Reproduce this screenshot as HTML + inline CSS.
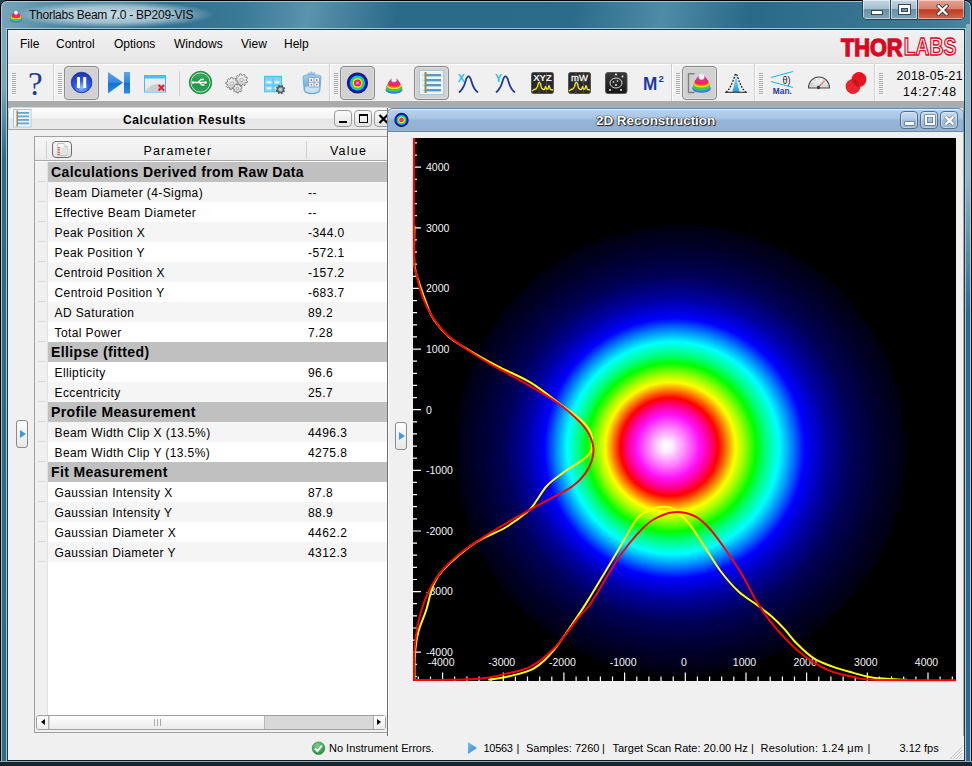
<!DOCTYPE html>
<html><head><meta charset="utf-8">
<style>
*{margin:0;padding:0;box-sizing:border-box}
html,body{width:972px;height:766px;overflow:hidden;background:#1d4556}
body{position:relative;font-family:"Liberation Sans",sans-serif;font-size:12px;color:#000}
.a{position:absolute}
#frame{left:0;top:0;width:972px;height:772px;border-radius:7px 7px 0 0;
 background:linear-gradient(100deg,#78a6ba 0%,#3f7c98 8%,#2f6f8e 14%,#3a7a97 22%,#5a93ac 28%,#2b6b8a 36%,#2c6c8b 52%,#4e8ca7 60%,#2a6988 68%,#3c7a96 84%,#74a6bb 100%);
 border:1px solid #000;box-shadow:inset 0 0 0 1px rgba(190,220,232,0.75)}
#client{left:7px;top:29px;width:958px;height:732px;background:#f0f0f0;border:1px solid #1e3646;box-shadow:0 0 0 1px rgba(175,210,224,0.85)}
.t{position:absolute;white-space:nowrap;line-height:1}
</style></head><body>
<div id="frame" class="a"></div>
<div id="client" class="a"></div>
<div class="a" style="left:2px;top:27px;width:4px;height:734px;background:linear-gradient(#7ea9bc 0,#7aa6ba 60px,#2c6b8a 130px)"></div>
<div class="a" style="left:966px;top:24px;width:4px;height:737px;background:linear-gradient(#8ab2c4 0,#92b8c9 150px,#2c6b8a 290px)"></div>

<!-- title -->
<div class="a" style="left:14px;top:1px;width:200px;height:27px;background:radial-gradient(closest-side,rgba(225,238,244,0.85),rgba(225,238,244,0.6) 60%,rgba(225,238,244,0) 100%)"></div>
<svg class="a" style="left:9px;top:10px" width="14" height="14" viewBox="0 0 14 14"><ellipse cx="7.00" cy="10.20" rx="5.60" ry="2.40" fill="#3a7ee8"/><ellipse cx="7.00" cy="9.93" rx="5.59" ry="2.37" fill="#3a7ee8"/><ellipse cx="7.00" cy="9.67" rx="5.56" ry="2.34" fill="#3a7ee8"/><ellipse cx="7.00" cy="9.40" rx="5.52" ry="2.30" fill="#3a7ee8"/><ellipse cx="7.00" cy="9.13" rx="5.47" ry="2.27" fill="#2fb4a0"/><ellipse cx="7.00" cy="8.87" rx="5.41" ry="2.24" fill="#2fb4a0"/><ellipse cx="7.00" cy="8.60" rx="5.34" ry="2.21" fill="#40c850"/><ellipse cx="7.00" cy="8.33" rx="5.27" ry="2.18" fill="#40c850"/><ellipse cx="7.00" cy="8.07" rx="5.18" ry="2.14" fill="#40c850"/><ellipse cx="7.00" cy="7.80" rx="5.10" ry="2.11" fill="#40c850"/><ellipse cx="7.00" cy="7.53" rx="5.00" ry="2.08" fill="#40c850"/><ellipse cx="7.00" cy="7.27" rx="4.90" ry="2.05" fill="#e8e020"/><ellipse cx="7.00" cy="7.00" rx="4.78" ry="2.02" fill="#e8e020"/><ellipse cx="7.00" cy="6.73" rx="4.67" ry="1.98" fill="#e8e020"/><ellipse cx="7.00" cy="6.47" rx="4.54" ry="1.95" fill="#f87018"/><ellipse cx="7.00" cy="6.20" rx="4.40" ry="1.92" fill="#f87018"/><ellipse cx="7.00" cy="5.93" rx="4.26" ry="1.89" fill="#f87018"/><ellipse cx="7.00" cy="5.67" rx="4.11" ry="1.86" fill="#f22a2a"/><ellipse cx="7.00" cy="5.40" rx="3.95" ry="1.82" fill="#f22a2a"/><ellipse cx="7.00" cy="5.13" rx="3.78" ry="1.79" fill="#f22a2a"/><ellipse cx="7.00" cy="4.87" rx="3.59" ry="1.76" fill="#e82a8a"/><ellipse cx="7.00" cy="4.60" rx="3.40" ry="1.73" fill="#e82a8a"/><ellipse cx="7.00" cy="4.33" rx="3.19" ry="1.70" fill="#e82a8a"/><ellipse cx="7.00" cy="4.07" rx="2.96" ry="1.66" fill="#e82a8a"/><ellipse cx="7.00" cy="3.80" rx="2.72" ry="1.63" fill="#e82a8a"/><ellipse cx="7.00" cy="3.53" rx="2.46" ry="1.60" fill="#e82a8a"/><ellipse cx="7.00" cy="3.27" rx="2.16" ry="1.57" fill="#e82a8a"/><ellipse cx="7.00" cy="3.00" rx="1.83" ry="1.54" fill="#f4f4f4"/><ellipse cx="7.00" cy="2.73" rx="1.44" ry="1.50" fill="#f4f4f4"/><ellipse cx="7.00" cy="2.47" rx="1.34" ry="1.47" fill="#f4f4f4"/><ellipse cx="7.00" cy="2.20" rx="1.34" ry="1.44" fill="#f4f4f4"/></svg>
<div class="t" style="left:29px;top:9px;font-size:12px;letter-spacing:-0.25px;color:#0a0a0a">Thorlabs Beam 7.0 - BP209-VIS</div>

<!-- caption buttons -->
<div class="a" style="left:862px;top:0;width:103px;height:20px;border:1px solid #2a4350;border-top:none;border-radius:0 0 5px 5px;overflow:hidden;display:flex">
 <div style="width:28px;height:100%;background:linear-gradient(#c3d7e1 0%,#a3bfcd 45%,#6a93a8 50%,#7ea4b6 100%);border-right:1px solid #2a4350;box-shadow:inset 0 0 0 1px rgba(255,255,255,0.5);position:relative">
  <div class="a" style="left:8px;top:10px;width:12px;height:5px;background:#fff;border:1px solid #34495a"></div></div>
 <div style="width:27px;height:100%;background:linear-gradient(#c3d7e1 0%,#a3bfcd 45%,#6a93a8 50%,#7ea4b6 100%);border-right:1px solid #2a4350;box-shadow:inset 0 0 0 1px rgba(255,255,255,0.5);position:relative">
  <div class="a" style="left:8px;top:5px;width:11px;height:9px;border:2.5px solid #fff;border-top-width:3px;outline:1px solid #34495a;box-shadow:inset 0 0 0 1px #34495a"></div></div>
 <div style="flex:1;height:100%;background:linear-gradient(#e2a496 0%,#d88370 45%,#c23a1e 52%,#d06a50 100%);box-shadow:inset 0 0 0 1px rgba(255,255,255,0.45);position:relative">
  <svg class="a" style="left:18px;top:4px" width="13" height="12" viewBox="0 0 13 12"><path d="M2.5 2 L10.5 10 M10.5 2 L2.5 10" stroke="#3c4048" stroke-width="4" stroke-linecap="square"/><path d="M2.5 2 L10.5 10 M10.5 2 L2.5 10" stroke="#fff" stroke-width="2.2" stroke-linecap="square"/></svg></div>
</div>

<!-- menu -->
<div class="a" style="left:8px;top:30px;width:956px;height:33px;background:linear-gradient(#f1f1f1,#e6e6e6)"></div>
<div class="t" style="left:20px;top:38px">File</div>
<div class="t" style="left:56px;top:38px">Control</div>
<div class="t" style="left:114px;top:38px">Options</div>
<div class="t" style="left:174px;top:38px">Windows</div>
<div class="t" style="left:241px;top:38px">View</div>
<div class="t" style="left:284px;top:38px">Help</div>


<!-- toolbar -->
<div class="a" style="left:8px;top:63px;width:956px;height:1px;background:#d9d9d9"></div>
<div class="a" style="left:8px;top:64px;width:956px;height:37px;background:#f0f0f0;border-top:1px solid #fff"></div>
<div class="a" style="left:8px;top:101px;width:956px;height:7px;background:#ababab"></div>
<style>
.grip{position:absolute;top:73px;width:4px;height:22px;background:repeating-linear-gradient(#a6a6a6 0,#a6a6a6 1px,#fff 1px,#fff 2px)}
.sep{position:absolute;top:64px;width:2px;height:37px;border-left:1px solid #d0d0d0;border-right:1px solid #fff}
.prs{position:absolute;top:66px;width:35px;height:34px;border:1px solid #8a8a8a;border-radius:4px;background:#d1d1d1;box-shadow:inset 0 0 0 1px #dcdcdc}
</style>
<div class="grip" style="left:12px"></div>
<div class="sep" style="left:53px"></div>
<div class="grip" style="left:58px"></div>
<div class="sep" style="left:329px"></div>
<div class="grip" style="left:334px"></div>
<div class="sep" style="left:671px"></div>
<div class="grip" style="left:676px"></div>
<div class="sep" style="left:754px"></div>
<div class="grip" style="left:759px"></div>
<div class="sep" style="left:874px"></div>
<div class="grip" style="left:879px"></div>
<div class="a" style="left:179px;top:71px;width:1px;height:25px;background:#cfcfcf"></div>
<div class="prs" style="left:64px"></div>
<div class="prs" style="left:340px"></div>
<div class="prs" style="left:414px"></div>
<div class="prs" style="left:682px"></div>

<div class="t" style="left:28px;top:68px;font-family:'Liberation Serif',serif;font-size:33px;color:#1f3b9a">?</div>

<svg class="a" style="left:70px;top:71px" width="24" height="24" viewBox="0 0 24 24">
 <defs><radialGradient id="gp" cx="0.5" cy="0.75" r="0.75"><stop offset="0" stop-color="#8fc0ff"/><stop offset="0.45" stop-color="#2c5df0"/><stop offset="1" stop-color="#1a2fa8"/></radialGradient></defs>
 <circle cx="11.6" cy="11.5" r="10.3" fill="url(#gp)" stroke="#1b2d90" stroke-width="0.8"/>
 <rect x="7" y="6" width="3" height="11" fill="#fff"/><rect x="13.2" y="6" width="3" height="11" fill="#fff"/>
</svg>

<svg class="a" style="left:107px;top:71px" width="24" height="24" viewBox="0 0 24 24">
 <defs><linearGradient id="gpl" x1="0" y1="0" x2="0" y2="1"><stop offset="0" stop-color="#5aa6f0"/><stop offset="0.5" stop-color="#2f86e0"/><stop offset="0.52" stop-color="#1070d0"/><stop offset="1" stop-color="#2a90e8"/></linearGradient></defs>
 <path d="M1 1 L16 11.5 L1 22.5Z" fill="url(#gpl)"/>
 <rect x="17" y="1" width="6" height="21.5" fill="url(#gpl)"/>
</svg>

<svg class="a" style="left:144px;top:75px" width="23" height="18" viewBox="0 0 23 18">
 <rect x="0.5" y="0.5" width="21" height="16.5" fill="#e9eaec" stroke="#45b8ee"/>
 <rect x="0.5" y="0.5" width="21" height="3" fill="#4cc0f2"/>
 <path d="M1 17 Q6 8 15 9 L21 10 L21 17Z" fill="#cdcdcd"/>
 <path d="M14.5 10 L20 15.5 M20 10 L14.5 15.5" stroke="#e0202a" stroke-width="2"/>
</svg>

<svg class="a" style="left:188px;top:70px" width="25" height="25" viewBox="0 0 25 25">
 <defs><linearGradient id="gu" x1="0" y1="0" x2="0" y2="1"><stop offset="0" stop-color="#3ab060"/><stop offset="0.5" stop-color="#1f9a48"/><stop offset="1" stop-color="#2aa456"/></linearGradient></defs>
 <circle cx="12.5" cy="12.5" r="11.2" fill="url(#gu)" stroke="#137a36" stroke-width="0.8"/>
 <circle cx="12.5" cy="12.5" r="9.6" fill="none" stroke="#d8f0e0" stroke-width="0.8"/>
 <path d="M5 12.5 H19 M10 12.5 L13 9.5 H16 M11.5 12.5 L14 15 H16.5" stroke="#fff" stroke-width="1.3" fill="none"/>
 <path d="M19 12.5 l-2.2 -1.6 v3.2z" fill="#fff"/><circle cx="5" cy="12.5" r="1.2" fill="#fff"/>
</svg>

<svg class="a" style="left:225px;top:73px" width="24" height="21" viewBox="0 0 24 21">
 <defs><linearGradient id="ggr" x1="0" y1="0" x2="0" y2="1"><stop offset="0" stop-color="#fbfbfb"/><stop offset="1" stop-color="#c8c8c8"/></linearGradient></defs>
 <g fill="url(#ggr)" stroke="#6c6c6c" stroke-width="0.8" stroke-linejoin="round">
 <path d="M21.28 7.48 L22.57 8.26 L22.09 9.69 L20.58 9.52 L19.85 10.44 L20.34 11.87 L19.05 12.65 L18.00 11.56 L16.86 11.79 L16.31 13.20 L14.82 12.97 L14.72 11.46 L13.70 10.90 L12.37 11.63 L11.38 10.49 L12.27 9.27 L11.85 8.18 L10.36 7.89 L10.33 6.38 L11.80 6.02 L12.18 4.92 L11.23 3.74 L12.17 2.56 L13.53 3.23 L14.53 2.62 L14.56 1.11 L16.04 0.82 L16.64 2.20 L17.80 2.38 L18.80 1.24 L20.12 1.97 L19.69 3.42 L20.47 4.30 L21.96 4.06 L22.51 5.47 L21.25 6.31Z"/><path d="M11.70 11.45 L12.91 12.36 L12.29 13.74 L10.81 13.42 L9.99 14.25 L10.33 15.73 L8.97 16.38 L8.04 15.19 L6.88 15.30 L6.20 16.65 L4.73 16.27 L4.79 14.76 L3.82 14.10 L2.43 14.69 L1.55 13.46 L2.57 12.34 L2.25 11.21 L0.81 10.77 L0.92 9.27 L2.42 9.06 L2.91 7.99 L2.08 6.73 L3.14 5.65 L4.42 6.45 L5.47 5.95 L5.65 4.45 L7.16 4.30 L7.62 5.74 L8.76 6.03 L9.86 5.00 L11.10 5.85 L10.54 7.25 L11.22 8.21 L12.73 8.12 L13.13 9.58 L11.80 10.29Z"/><path d="M15.84 16.53 L16.67 17.44 L15.87 18.63 L14.72 18.21 L13.78 18.76 L13.59 19.97 L12.15 20.09 L11.77 18.92 L10.75 18.53 L9.68 19.14 L8.70 18.09 L9.37 17.06 L9.04 16.02 L7.90 15.57 L8.11 14.14 L9.33 14.03 L9.94 13.12 L9.58 11.94 L10.82 11.22 L11.67 12.10 L12.76 12.01 L13.46 11.00 L14.80 11.52 L14.64 12.73 L15.39 13.53 L16.62 13.45 L17.05 14.82 L16.00 15.45Z"/>
 </g>
 <g fill="#f4f4f4" stroke="#8a8a8a" stroke-width="0.7"><circle cx="7" cy="10.5" r="1.7"/><circle cx="16.5" cy="7" r="1.7"/><circle cx="12.5" cy="15.5" r="1.2"/></g>
</svg>

<svg class="a" style="left:263px;top:75px" width="23" height="20" viewBox="0 0 23 20">
 <rect x="1" y="0.8" width="18" height="16.5" fill="#48c4f2"/>
 <rect x="2" y="2.6" width="16" height="0.8" fill="#c8ecfb"/>
 <rect x="2" y="4.2" width="16" height="12.2" fill="#8ad8f6"/>
 <path d="M10 4.2 V16.4 M2 10.3 H18" stroke="#48c4f2" stroke-width="0.9"/>
 <g fill="#f4f0ec"><rect x="3.5" y="6.3" width="5" height="2" rx="1"/><rect x="11.5" y="6.3" width="5" height="2" rx="1"/><rect x="3.5" y="12.2" width="5" height="2" rx="1"/><rect x="11.5" y="12.2" width="5" height="2" rx="1"/></g>
 <path d="M20.73 15.16 L21.68 15.87 L21.15 16.96 L20.00 16.65 L19.32 17.25 L19.48 18.43 L18.34 18.82 L17.75 17.79 L16.84 17.73 L16.13 18.68 L15.04 18.15 L15.35 17.00 L14.75 16.32 L13.57 16.48 L13.18 15.34 L14.21 14.75 L14.27 13.84 L13.32 13.13 L13.85 12.04 L15.00 12.35 L15.68 11.75 L15.52 10.57 L16.66 10.18 L17.25 11.21 L18.16 11.27 L18.87 10.32 L19.96 10.85 L19.65 12.00 L20.25 12.68 L21.43 12.52 L21.82 13.66 L20.79 14.25Z" fill="#585858" stroke="#3a3a3a" stroke-width="0.5"/>
 <circle cx="17.5" cy="14.5" r="1.8" fill="#a8c8e0" stroke="#e0e0e0" stroke-width="0.6"/>
</svg>

<svg class="a" style="left:301px;top:70px" width="22" height="25" viewBox="0 0 22 25">
 <defs><linearGradient id="gdb" x1="0" y1="0" x2="0" y2="1"><stop offset="0" stop-color="#a8d0ea"/><stop offset="0.5" stop-color="#7ab4de"/><stop offset="1" stop-color="#4a98e0"/></linearGradient>
 <linearGradient id="gdb2" x1="0" y1="0" x2="0" y2="1"><stop offset="0" stop-color="#8ec2e6"/><stop offset="1" stop-color="#e4f2fc"/></linearGradient></defs>
 <path d="M15.08 7.46 L15.99 8.08 L15.63 9.25 L14.52 9.24 L13.93 10.06 L14.31 11.10 L13.32 11.84 L12.43 11.17 L11.48 11.49 L11.17 12.56 L9.94 12.57 L9.61 11.51 L8.65 11.21 L7.77 11.89 L6.77 11.18 L7.13 10.13 L6.53 9.32 L5.42 9.36 L5.03 8.19 L5.93 7.55 L5.92 6.54 L5.01 5.92 L5.37 4.75 L6.48 4.76 L7.07 3.94 L6.69 2.90 L7.68 2.16 L8.57 2.83 L9.52 2.51 L9.83 1.44 L11.06 1.43 L11.39 2.49 L12.35 2.79 L13.23 2.11 L14.23 2.82 L13.87 3.87 L14.47 4.68 L15.58 4.64 L15.97 5.81 L15.07 6.45Z" fill="#94c4e6"/>
 <path d="M2 8 Q1.5 5 5 5 L17 5 Q20.5 5 20 8 L19 20 Q18.5 23.5 11 23.8 Q3.5 23.5 3 20Z" fill="url(#gdb)" stroke="#5a9ad4" stroke-width="0.6"/>
 <path d="M4 17 Q11 14 18.5 17 L18.2 20 Q17 22.8 11 23 Q5 22.8 3.8 20Z" fill="#d8ecfa" opacity="0.85"/>
 <rect x="7.5" y="7.5" width="11" height="9.5" rx="1" fill="#eef4f8" stroke="#6a90b0" stroke-width="0.7"/>
 <path d="M13 8 V16.5 M8 12.2 H18" stroke="#6a90b0" stroke-width="0.7"/>
 <g fill="#b07090"><circle cx="10.3" cy="10" r="0.9"/><circle cx="15.7" cy="10" r="0.9"/><circle cx="10.3" cy="14.6" r="0.9"/><circle cx="15.7" cy="14.6" r="0.9"/></g>
</svg>

<svg class="a" style="left:346px;top:72px" width="23" height="23" viewBox="0 0 23 23">
 <circle cx="11.5" cy="11" r="10.6" fill="#1c1f5e"/>
 <circle cx="11.5" cy="11" r="9" fill="#1010f0"/>
 <circle cx="11.5" cy="11" r="7.6" fill="#00c8f8"/>
 <circle cx="11.5" cy="11" r="6.2" fill="#20e030"/>
 <circle cx="11.5" cy="11" r="4.8" fill="#f8f010"/>
 <circle cx="11.5" cy="11" r="3.5" fill="#f82020"/>
 <circle cx="11.5" cy="11" r="2.4" fill="#f820e8"/>
 <circle cx="11.5" cy="11" r="1" fill="#ffd0ff"/>
</svg>

<svg class="a" style="left:384px;top:75px" width="20" height="21" viewBox="0 0 20 21"><ellipse cx="10.00" cy="15.30" rx="8.20" ry="3.40" fill="#3a7ee8"/><ellipse cx="10.00" cy="14.92" rx="8.18" ry="3.35" fill="#3a7ee8"/><ellipse cx="10.00" cy="14.53" rx="8.14" ry="3.31" fill="#3a7ee8"/><ellipse cx="10.00" cy="14.15" rx="8.08" ry="3.26" fill="#3a7ee8"/><ellipse cx="10.00" cy="13.77" rx="8.00" ry="3.22" fill="#2fb4a0"/><ellipse cx="10.00" cy="13.38" rx="7.92" ry="3.17" fill="#2fb4a0"/><ellipse cx="10.00" cy="13.00" rx="7.82" ry="3.13" fill="#40c850"/><ellipse cx="10.00" cy="12.62" rx="7.71" ry="3.08" fill="#40c850"/><ellipse cx="10.00" cy="12.23" rx="7.59" ry="3.04" fill="#40c850"/><ellipse cx="10.00" cy="11.85" rx="7.46" ry="2.99" fill="#40c850"/><ellipse cx="10.00" cy="11.47" rx="7.32" ry="2.95" fill="#40c850"/><ellipse cx="10.00" cy="11.08" rx="7.17" ry="2.90" fill="#e8e020"/><ellipse cx="10.00" cy="10.70" rx="7.01" ry="2.86" fill="#e8e020"/><ellipse cx="10.00" cy="10.32" rx="6.83" ry="2.81" fill="#e8e020"/><ellipse cx="10.00" cy="9.93" rx="6.65" ry="2.77" fill="#f87018"/><ellipse cx="10.00" cy="9.55" rx="6.45" ry="2.72" fill="#f87018"/><ellipse cx="10.00" cy="9.17" rx="6.24" ry="2.67" fill="#f87018"/><ellipse cx="10.00" cy="8.78" rx="6.02" ry="2.63" fill="#f22a2a"/><ellipse cx="10.00" cy="8.40" rx="5.78" ry="2.58" fill="#f22a2a"/><ellipse cx="10.00" cy="8.02" rx="5.53" ry="2.54" fill="#f22a2a"/><ellipse cx="10.00" cy="7.63" rx="5.26" ry="2.49" fill="#e82a8a"/><ellipse cx="10.00" cy="7.25" rx="4.98" ry="2.45" fill="#e82a8a"/><ellipse cx="10.00" cy="6.87" rx="4.67" ry="2.40" fill="#e82a8a"/><ellipse cx="10.00" cy="6.48" rx="4.34" ry="2.36" fill="#e82a8a"/><ellipse cx="10.00" cy="6.10" rx="3.98" ry="2.31" fill="#e82a8a"/><ellipse cx="10.00" cy="5.72" rx="3.60" ry="2.27" fill="#e82a8a"/><ellipse cx="10.00" cy="5.33" rx="3.17" ry="2.22" fill="#e82a8a"/><ellipse cx="10.00" cy="4.95" rx="2.68" ry="2.18" fill="#f4f4f4"/><ellipse cx="10.00" cy="4.57" rx="2.12" ry="2.13" fill="#f4f4f4"/><ellipse cx="10.00" cy="4.18" rx="1.97" ry="2.09" fill="#f4f4f4"/><ellipse cx="10.00" cy="3.80" rx="1.97" ry="2.04" fill="#f4f4f4"/></svg>

<svg class="a" style="left:419px;top:70px" width="25" height="26" viewBox="0 0 25 26">
 <rect x="0.5" y="0.5" width="24" height="24" fill="#fff" stroke="#a8c8e0"/>
 <rect x="1.5" y="1.5" width="22" height="22" fill="#eaf4fb"/>
 <g fill="#5a9ac0"><rect x="7" y="4" width="15" height="2.4"/><rect x="7" y="9" width="15" height="2.4"/><rect x="7" y="14" width="15" height="2.4"/><rect x="7" y="19" width="15" height="2.4"/></g>
 <g fill="#c0e0f4"><rect x="3" y="4.5" width="3" height="1.4"/><rect x="3" y="9.5" width="3" height="1.4"/><rect x="3" y="14.5" width="3" height="1.4"/><rect x="3" y="19.5" width="3" height="1.4"/></g>
 <rect x="5.5" y="2" width="2" height="21" fill="#9a8a50"/>
</svg>

<svg class="a" style="left:457px;top:73px" width="23" height="21" viewBox="0 0 23 21">
 <path d="M2 19.5 C5 17 7 14 8.5 8.5 C9.5 4.5 10.5 3.3 11.5 3.3 C12.5 3.3 13.5 4.5 14.5 8.5 C16 14 17.5 17 21 19.5" fill="none" stroke="#22389a" stroke-width="1.8"/>
 <text x="0.8" y="8.8" font-family="Liberation Sans" font-weight="bold" font-size="10.5" fill="#18c0f8">X</text>
</svg>
<svg class="a" style="left:494px;top:73px" width="23" height="21" viewBox="0 0 23 21">
 <path d="M2 19.5 C5 17 7 14 8.5 8.5 C9.5 4.5 10.5 3.3 11.5 3.3 C12.5 3.3 13.5 4.5 14.5 8.5 C16 14 17.5 17 21 19.5" fill="none" stroke="#22389a" stroke-width="1.8"/>
 <text x="1" y="8.8" font-family="Liberation Sans" font-weight="bold" font-size="10.5" fill="#18c0f8">Y</text>
</svg>

<svg class="a" style="left:531px;top:72px" width="23" height="22" viewBox="0 0 23 22">
 <rect x="0.5" y="0.5" width="22" height="21" rx="2" fill="#2a2a2a" stroke="#555"/>
 <path d="M8 1 V21 M15.5 1 V21" stroke="#5a5a5a" stroke-width="0.8"/>
 <text x="11.5" y="8.6" text-anchor="middle" font-family="Liberation Sans" font-weight="bold" font-size="9.5" fill="#f4f4f4">XYZ</text>
 <path d="M1 19 L3 17.5 L5 17 L6.5 14.5 L7.5 11 L8.5 10.3 L9.5 11.5 L10.5 16 L12 17.5 L13.5 17.5 L14.5 14.5 L15.5 17 L17 17 L18 13.5 L19.5 17.5 L22 18" fill="none" stroke="#f4e81a" stroke-width="1.3" stroke-linejoin="round"/>
</svg>
<svg class="a" style="left:568px;top:72px" width="23" height="22" viewBox="0 0 23 22">
 <rect x="0.5" y="0.5" width="22" height="21" rx="2" fill="#2a2a2a" stroke="#555"/>
 <path d="M8 1 V21 M15.5 1 V21" stroke="#5a5a5a" stroke-width="0.8"/>
 <text x="11.5" y="8.6" text-anchor="middle" font-family="Liberation Sans" font-size="9.5" fill="#f4f4f4" stroke="#f4f4f4" stroke-width="0.3">mW</text>
 <path d="M1 19 L3 17.5 L5 17 L6.5 14.5 L7.5 11 L8.5 10.3 L9.5 11.5 L10.5 16 L12 17.5 L13.5 17.5 L14.5 14.5 L15.5 17 L17 17 L18 13.5 L19.5 17.5 L22 18" fill="none" stroke="#f4e81a" stroke-width="1.3" stroke-linejoin="round"/>
</svg>

<svg class="a" style="left:605px;top:72px" width="23" height="22" viewBox="0 0 23 22">
 <defs><linearGradient id="gdt" x1="0" y1="0" x2="0" y2="1"><stop offset="0" stop-color="#3a3a3a"/><stop offset="1" stop-color="#161616"/></linearGradient></defs>
 <rect x="0.5" y="0.5" width="21.5" height="21" rx="2.5" fill="url(#gdt)" stroke="#555"/>
 <ellipse cx="11" cy="11" rx="6" ry="5" fill="none" stroke="#e8e8e8" stroke-width="0.9"/>
 <g fill="#fff"><circle cx="11" cy="2.5" r="0.9"/><circle cx="17.5" cy="4.5" r="0.9"/><circle cx="5" cy="18" r="0.9"/><circle cx="16" cy="18" r="0.9"/><circle cx="8.5" cy="10" r="0.8"/><circle cx="12.5" cy="9" r="0.8"/><circle cx="11" cy="13" r="0.9"/></g>
</svg>

<div class="t" style="left:642.5px;top:74.5px;font-size:18.5px;font-weight:bold;color:#1a3aa8;transform:scaleX(0.93);transform-origin:left">M</div>
<div class="t" style="left:658.5px;top:74px;font-size:9.5px;font-weight:bold;color:#1a3aa8">2</div>

<svg class="a" style="left:687px;top:72px" width="26" height="23" viewBox="0 0 26 23"><path d="M7.5 1.8 H1.5 V20.5 H7.5" fill="none" stroke="#808080" stroke-width="1.4"/><ellipse cx="14.50" cy="17.00" rx="9.00" ry="3.80" fill="#3a7ee8"/><ellipse cx="14.50" cy="16.57" rx="8.98" ry="3.75" fill="#3a7ee8"/><ellipse cx="14.50" cy="16.13" rx="8.93" ry="3.70" fill="#3a7ee8"/><ellipse cx="14.50" cy="15.70" rx="8.86" ry="3.65" fill="#3a7ee8"/><ellipse cx="14.50" cy="15.27" rx="8.78" ry="3.60" fill="#2fb4a0"/><ellipse cx="14.50" cy="14.83" rx="8.69" ry="3.55" fill="#2fb4a0"/><ellipse cx="14.50" cy="14.40" rx="8.58" ry="3.50" fill="#40c850"/><ellipse cx="14.50" cy="13.97" rx="8.46" ry="3.45" fill="#40c850"/><ellipse cx="14.50" cy="13.53" rx="8.33" ry="3.39" fill="#40c850"/><ellipse cx="14.50" cy="13.10" rx="8.19" ry="3.34" fill="#40c850"/><ellipse cx="14.50" cy="12.67" rx="8.03" ry="3.29" fill="#40c850"/><ellipse cx="14.50" cy="12.23" rx="7.87" ry="3.24" fill="#e8e020"/><ellipse cx="14.50" cy="11.80" rx="7.69" ry="3.19" fill="#e8e020"/><ellipse cx="14.50" cy="11.37" rx="7.50" ry="3.14" fill="#e8e020"/><ellipse cx="14.50" cy="10.93" rx="7.29" ry="3.09" fill="#f87018"/><ellipse cx="14.50" cy="10.50" rx="7.08" ry="3.04" fill="#f87018"/><ellipse cx="14.50" cy="10.07" rx="6.85" ry="2.99" fill="#f87018"/><ellipse cx="14.50" cy="9.63" rx="6.60" ry="2.94" fill="#f22a2a"/><ellipse cx="14.50" cy="9.20" rx="6.34" ry="2.89" fill="#f22a2a"/><ellipse cx="14.50" cy="8.77" rx="6.07" ry="2.84" fill="#f22a2a"/><ellipse cx="14.50" cy="8.33" rx="5.77" ry="2.79" fill="#e82a8a"/><ellipse cx="14.50" cy="7.90" rx="5.46" ry="2.74" fill="#e82a8a"/><ellipse cx="14.50" cy="7.47" rx="5.12" ry="2.69" fill="#e82a8a"/><ellipse cx="14.50" cy="7.03" rx="4.76" ry="2.63" fill="#e82a8a"/><ellipse cx="14.50" cy="6.60" rx="4.37" ry="2.58" fill="#e82a8a"/><ellipse cx="14.50" cy="6.17" rx="3.95" ry="2.53" fill="#e82a8a"/><ellipse cx="14.50" cy="5.73" rx="3.47" ry="2.48" fill="#e82a8a"/><ellipse cx="14.50" cy="5.30" rx="2.94" ry="2.43" fill="#f4f4f4"/><ellipse cx="14.50" cy="4.87" rx="2.32" ry="2.38" fill="#f4f4f4"/><ellipse cx="14.50" cy="4.43" rx="2.16" ry="2.33" fill="#f4f4f4"/><ellipse cx="14.50" cy="4.00" rx="2.16" ry="2.28" fill="#f4f4f4"/></svg>

<svg class="a" style="left:724px;top:72px" width="24" height="22" viewBox="0 0 24 22">
 <defs><linearGradient id="gtr" x1="0" y1="0" x2="0" y2="1"><stop offset="0" stop-color="#b0e4fa"/><stop offset="1" stop-color="#1f9ae2"/></linearGradient></defs>
 <path d="M8.3 20 C10 15 11 7 12 2.5 C13 7 14 15 15.7 20Z" fill="url(#gtr)"/>
 <path d="M2 20 C5 18.5 7.5 13 9.5 7.5 C10.7 4 11.3 2 12 2 C12.7 2 13.3 4 14.5 7.5 C16.5 13 19 18.5 22 20" fill="none" stroke="#222" stroke-width="1.3" stroke-dasharray="1.8 1.3"/>
 <path d="M1 20.3 H23" stroke="#222" stroke-width="1"/>
</svg>

<svg class="a" style="left:770px;top:70px" width="24" height="25" viewBox="0 0 24 25">
 <path d="M1 7.5 L23 1.5 M1 11.5 L23 17.5" stroke="#28b8e8" stroke-width="1.2"/>
 <text x="12.5" y="13.8" font-family="Liberation Sans" font-size="10.5" fill="#222" textLength="8" lengthAdjust="spacingAndGlyphs">θ)</text>
 <text x="2.8" y="23.5" font-family="Liberation Sans" font-weight="bold" font-size="8.5" fill="#2a3a9a" textLength="19" lengthAdjust="spacingAndGlyphs">Man.</text>
</svg>

<svg class="a" style="left:807px;top:75px" width="24" height="15" viewBox="0 0 24 15">
 <defs><linearGradient id="gga" x1="0" y1="0" x2="0" y2="1"><stop offset="0" stop-color="#fdfdfd"/><stop offset="1" stop-color="#d0d0d0"/></linearGradient></defs>
 <path d="M1.5 13 A10.5 11 0 0 1 22.5 13 Z" fill="url(#gga)" stroke="#4a4a4a" stroke-width="1.1"/>
 <path d="M11.5 12 L18 5.5" stroke="#e03030" stroke-width="1"/>
 <circle cx="11.5" cy="12.5" r="1.8" fill="#444"/>
 <g fill="#777"><circle cx="5" cy="9" r="0.5"/><circle cx="8" cy="5" r="0.5"/><circle cx="12" cy="4" r="0.5"/><circle cx="16" cy="5" r="0.5"/></g>
</svg>

<svg class="a" style="left:844px;top:71px" width="24" height="24" viewBox="0 0 24 24">
 <circle cx="15" cy="8.5" r="7.4" fill="#e8141e"/>
 <circle cx="9" cy="15.5" r="7.4" fill="#e8141e" fill-opacity="0.92"/>
 <path d="M9.2 8.2 A7.4 7.4 0 0 1 14.8 15.8 A7.4 7.4 0 0 1 9.2 8.2Z" fill="#b01a28"/>
</svg>

<div class="t" style="left:896.5px;top:70px;font-size:12.3px;letter-spacing:0.35px">2018-05-21</div>
<div class="t" style="left:903px;top:86px;font-size:12.3px;letter-spacing:0.75px">14:27:48</div>

<!-- logo -->
<svg class="a" style="left:830px;top:30px" width="135" height="30" viewBox="830 30 135 30">
 <text x="841" y="55.8" font-family="Liberation Sans" font-weight="bold" font-size="23.8" textLength="61.5" lengthAdjust="spacingAndGlyphs" fill="#d70a1f" stroke="#d70a1f" stroke-width="1.3">THOR</text>
 <text x="903.8" y="55.4" font-family="Liberation Sans" font-weight="bold" font-size="23.5" textLength="52.5" lengthAdjust="spacingAndGlyphs" fill="#f4f4f4" stroke="#d70a1f" stroke-width="1.35">LABS</text>
</svg>


<!-- dock -->
<div class="a" style="left:8px;top:107px;width:380px;height:23px;border-radius:5px 0 0 0;background:linear-gradient(#fdfdfd 0%,#f4f4f4 45%,#e6e6e6 55%,#e9e9e9 100%);border-bottom:1px solid #a6a6a6;border-left:1px solid #c8c8c8;border-top:1px solid #d8d8d8"></div>
<svg class="a" style="left:13px;top:109px" width="19" height="19" viewBox="0 0 19 19">
 <rect x="0.5" y="0.5" width="17.5" height="17.5" fill="#fff" stroke="#a8c8e0"/>
 <rect x="1.5" y="1.5" width="15.5" height="15.5" fill="#eaf4fb"/>
 <g fill="#6aa4c8"><rect x="5" y="3" width="11" height="1.8"/><rect x="5" y="6.5" width="11" height="1.8"/><rect x="5" y="10" width="11" height="1.8"/><rect x="5" y="13.5" width="11" height="1.8"/></g>
 <rect x="3.5" y="1.5" width="1.5" height="16" fill="#9a8a50"/>
</svg>
<div class="t" style="left:123px;top:114px;font-size:12px;font-weight:bold;letter-spacing:0.62px">Calculation Results</div>
<style>
.dbtn{position:absolute;top:110px;width:18px;height:17px;border:1px solid #9a9a9a;border-radius:4px;background:linear-gradient(#fafafa,#e4e4e4)}
.cell{position:absolute;left:48px;width:339px;height:20px}
.sec{background:#c0c0c0}
.sec span{position:absolute;left:3px;top:3px;font-size:14px;font-weight:bold;letter-spacing:0.37px;white-space:nowrap;line-height:1}
.rw span{position:absolute;top:5px;font-size:12px;white-space:nowrap;line-height:1}
.vtick{position:absolute;left:38px;width:8px;height:1px;background:#d8d8d8}
</style>
<div class="dbtn" style="left:334px"><div class="a" style="left:4px;top:10px;width:8px;height:2px;background:#000"></div></div>
<div class="dbtn" style="left:354px"><div class="a" style="left:4px;top:3px;width:9px;height:9px;border:1.5px solid #000;border-top-width:2.5px"></div></div>
<div class="dbtn" style="left:374px"><svg class="a" style="left:3px;top:3px" width="11" height="10" viewBox="0 0 11 10"><path d="M1.5 1 L9.5 9 M9.5 1 L1.5 9" stroke="#000" stroke-width="2.3"/></svg></div>

<div class="a" style="left:34px;top:136px;width:354px;height:597px;border:1px solid #a0a0a0;border-right:none;background:#fff"></div>
<div class="a" style="left:35px;top:715px;width:353px;height:17px;background:#f0f0f0"></div>
<div class="a" style="left:35px;top:137px;width:353px;height:24px;background:linear-gradient(#f6f6f6,#ececec);border-bottom:1px solid #a8a8a8"></div>
<div class="a" style="left:46px;top:141px;width:1px;height:18px;background:#d0d0d0"></div>
<div class="a" style="left:306px;top:141px;width:1px;height:18px;background:#d0d0d0"></div>
<svg class="a" style="left:52px;top:141px" width="20" height="17" viewBox="0 0 20 17">
 <defs><linearGradient id="ghd" x1="0" y1="0" x2="0" y2="1"><stop offset="0" stop-color="#f8f8f8"/><stop offset="1" stop-color="#e2e2e2"/></linearGradient></defs>
 <rect x="0.5" y="0.5" width="19" height="16" rx="3.5" fill="url(#ghd)" stroke="#6e6e6e"/>
 <path d="M5.5 2.5 H12 L15 5.5 V14.5 H5.5Z" fill="#fff" stroke="#b8b8b8" stroke-width="0.8"/>
 <path d="M12 2.5 V5.5 H15" fill="#eee" stroke="#b8b8b8" stroke-width="0.6"/>
 <path d="M8.5 7 H14 M8.5 9 H14 M8.5 11 H14 M8.5 13 H14" stroke="#c4c4c4" stroke-width="0.9"/>
 <path d="M7 6 V14" stroke="#e82020" stroke-width="1.4" stroke-dasharray="1.2 0.5"/>
</svg>
<div class="t" style="left:143.5px;top:145px;font-size:12.5px;letter-spacing:1.15px">Parameter</div>
<div class="t" style="left:330px;top:145px;font-size:12.5px;letter-spacing:1.2px">Value</div>
<div class="a" style="left:35px;top:162px;width:13px;height:553px;background:#f0f0f0;border-right:1px solid #e2e2e2"></div>

<div class="cell sec" style="top:162px"><span>Calculations Derived from Raw Data</span></div>
<div class="vtick" style="top:181px"></div>
<div class="cell rw" style="top:182px;background:#f5f5f5"><span style="left:6.5px;letter-spacing:0.4px">Beam Diameter (4-Sigma)</span><span style="left:260px;letter-spacing:0.43px">--</span></div>
<div class="vtick" style="top:201px"></div>
<div class="cell rw" style="top:202px;background:#fff"><span style="left:6.5px;letter-spacing:0.4px">Effective Beam Diameter</span><span style="left:260px;letter-spacing:0.43px">--</span></div>
<div class="vtick" style="top:221px"></div>
<div class="cell rw" style="top:222px;background:#f5f5f5"><span style="left:6.5px;letter-spacing:0.4px">Peak Position X</span><span style="left:260px;letter-spacing:0.43px">-344.0</span></div>
<div class="vtick" style="top:241px"></div>
<div class="cell rw" style="top:242px;background:#fff"><span style="left:6.5px;letter-spacing:0.4px">Peak Position Y</span><span style="left:260px;letter-spacing:0.43px">-572.1</span></div>
<div class="vtick" style="top:261px"></div>
<div class="cell rw" style="top:262px;background:#f5f5f5"><span style="left:6.5px;letter-spacing:0.4px">Centroid Position X</span><span style="left:260px;letter-spacing:0.43px">-157.2</span></div>
<div class="vtick" style="top:281px"></div>
<div class="cell rw" style="top:282px;background:#fff"><span style="left:6.5px;letter-spacing:0.4px">Centroid Position Y</span><span style="left:260px;letter-spacing:0.43px">-683.7</span></div>
<div class="vtick" style="top:301px"></div>
<div class="cell rw" style="top:302px;background:#f5f5f5"><span style="left:6.5px;letter-spacing:0.4px">AD Saturation</span><span style="left:260px;letter-spacing:0.43px">89.2</span></div>
<div class="vtick" style="top:321px"></div>
<div class="cell rw" style="top:322px;background:#fff"><span style="left:6.5px;letter-spacing:0.4px">Total Power</span><span style="left:260px;letter-spacing:0.43px">7.28</span></div>
<div class="vtick" style="top:341px"></div>
<div class="cell sec" style="top:342px"><span>Ellipse (fitted)</span></div>
<div class="vtick" style="top:361px"></div>
<div class="cell rw" style="top:362px;background:#fff"><span style="left:6.5px;letter-spacing:0.4px">Ellipticity</span><span style="left:260px;letter-spacing:0.43px">96.6</span></div>
<div class="vtick" style="top:381px"></div>
<div class="cell rw" style="top:382px;background:#f5f5f5"><span style="left:6.5px;letter-spacing:0.4px">Eccentricity</span><span style="left:260px;letter-spacing:0.43px">25.7</span></div>
<div class="vtick" style="top:401px"></div>
<div class="cell sec" style="top:402px"><span>Profile Measurement</span></div>
<div class="vtick" style="top:421px"></div>
<div class="cell rw" style="top:422px;background:#f5f5f5"><span style="left:6.5px;letter-spacing:0.4px">Beam Width Clip X (13.5%)</span><span style="left:260px;letter-spacing:0.43px">4496.3</span></div>
<div class="vtick" style="top:441px"></div>
<div class="cell rw" style="top:442px;background:#fff"><span style="left:6.5px;letter-spacing:0.4px">Beam Width Clip Y (13.5%)</span><span style="left:260px;letter-spacing:0.43px">4275.8</span></div>
<div class="vtick" style="top:461px"></div>
<div class="cell sec" style="top:462px"><span>Fit Measurement</span></div>
<div class="vtick" style="top:481px"></div>
<div class="cell rw" style="top:482px;background:#fff"><span style="left:6.5px;letter-spacing:0.4px">Gaussian Intensity X</span><span style="left:260px;letter-spacing:0.43px">87.8</span></div>
<div class="vtick" style="top:501px"></div>
<div class="cell rw" style="top:502px;background:#f5f5f5"><span style="left:6.5px;letter-spacing:0.4px">Gaussian Intensity Y</span><span style="left:260px;letter-spacing:0.43px">88.9</span></div>
<div class="vtick" style="top:521px"></div>
<div class="cell rw" style="top:522px;background:#fff"><span style="left:6.5px;letter-spacing:0.4px">Gaussian Diameter X</span><span style="left:260px;letter-spacing:0.43px">4462.2</span></div>
<div class="vtick" style="top:541px"></div>
<div class="cell rw" style="top:542px;background:#f5f5f5"><span style="left:6.5px;letter-spacing:0.4px">Gaussian Diameter Y</span><span style="left:260px;letter-spacing:0.43px">4312.3</span></div>
<div class="vtick" style="top:561px"></div>

<!-- hscroll -->
<div class="a" style="left:36px;top:715px;width:350px;height:15px;border:1px solid #a0a0a0;border-radius:3px;background:#d8d8d8"></div>
<div class="a" style="left:37px;top:716px;width:12px;height:13px;border-right:1px solid #b0b0b0;background:linear-gradient(#fff,#ececec);border-radius:2px 0 0 2px"></div>
<div class="a" style="left:41px;top:719px;width:0;height:0;border-top:3.5px solid transparent;border-bottom:3.5px solid transparent;border-right:4px solid #000"></div>
<div class="a" style="left:50px;top:716px;width:215px;height:13px;background:linear-gradient(#fefefe,#ebebeb);border-right:1px solid #b8b8b8"></div>
<div class="a" style="left:154px;top:719px;width:1px;height:7px;background:#a8a8a8;box-shadow:3px 0 0 #a8a8a8,6px 0 0 #a8a8a8"></div>
<div class="a" style="left:373px;top:716px;width:12px;height:13px;border-left:1px solid #b0b0b0;background:linear-gradient(#fff,#ececec)"></div>
<div class="a" style="left:377px;top:719px;width:0;height:0;border-top:3.5px solid transparent;border-bottom:3.5px solid transparent;border-left:4px solid #000"></div>

<!-- left dock side button -->
<div class="a" style="left:16px;top:420px;width:12px;height:28px;border:1px solid #8a8a8a;border-radius:3px;background:linear-gradient(#fdfdfd,#e8e8e8)"></div>
<div class="a" style="left:20px;top:430px;width:0;height:0;border-top:4px solid transparent;border-bottom:4px solid transparent;border-left:6px solid #3a9ae8"></div>


<!-- MDI window -->
<div class="a" style="left:387px;top:108px;width:577px;height:628px;background:#f0f0f0;border-left:1px solid #6f6f6f;border-right:1px solid #a8a8a8;box-shadow:inset 1px 0 0 #fff"></div>
<div class="a" style="left:387px;top:108px;width:577px;height:24px;border:1px solid #6c88a8;border-radius:6px 6px 0 0;background:linear-gradient(#b8d2ec 0%,#a9c6e6 40%,#94b4d6 52%,#93b2d2 100%);box-shadow:inset 0 1px 0 rgba(255,255,255,0.6)"></div>
<svg class="a" style="left:394px;top:112px" width="16" height="16" viewBox="0 0 16 16">
 <circle cx="7.5" cy="8" r="7.2" fill="#1c1f5e"/>
 <circle cx="7.5" cy="8" r="6" fill="#1010f0"/>
 <circle cx="7.5" cy="8" r="5" fill="#00c8f8"/>
 <circle cx="7.5" cy="8" r="4.1" fill="#20e030"/>
 <circle cx="7.5" cy="8" r="3.2" fill="#f8f010"/>
 <circle cx="7.5" cy="8" r="2.3" fill="#f82020"/>
 <circle cx="7.5" cy="8" r="1.5" fill="#f820e8"/>
</svg>
<div class="t" style="left:596px;top:114px;font-size:13px;font-weight:bold;letter-spacing:0.15px;color:#fff;text-shadow:0 0 1px #000,0 0 1px #000,1px 1px 1px #223"></div>
<style>
.mbtn{position:absolute;top:111px;width:18px;height:18px;border:1px solid #56708c;border-radius:4px;background:linear-gradient(rgba(255,255,255,0.25),rgba(255,255,255,0.05));box-shadow:inset 0 0 0 1px rgba(255,255,255,0.35)}
</style>
<div class="mbtn" style="left:900px"><div class="a" style="left:4px;top:10px;width:9px;height:3px;background:#fff;box-shadow:0 0 0 0.5px #456"></div></div>
<div class="mbtn" style="left:920px"><div class="a" style="left:4px;top:3px;width:10px;height:10px;border:2px solid #fff;border-top-width:2px;box-shadow:0 0 0 0.5px #456,inset 0 0 0 0.5px #456"></div></div>
<div class="mbtn" style="left:940px"><svg class="a" style="left:3px;top:3px" width="11" height="11" viewBox="0 0 11 11"><path d="M1.5 1.5 L9.5 9.5 M9.5 1.5 L1.5 9.5" stroke="#456" stroke-width="3.8"/><path d="M1.5 1.5 L9.5 9.5 M9.5 1.5 L1.5 9.5" stroke="#fff" stroke-width="2.6"/></svg></div>

<div class="a" style="left:395px;top:422px;width:12px;height:28px;border:1px solid #8a8a8a;border-radius:3px;background:linear-gradient(#fdfdfd,#e8e8e8)"></div>
<div class="a" style="left:399px;top:432px;width:0;height:0;border-top:4px solid transparent;border-bottom:4px solid transparent;border-left:6px solid #3a9ae8"></div>

<svg class="a" style="left:0;top:0" width="972" height="766" viewBox="0 0 972 766">
<defs><radialGradient id="beam" gradientUnits="userSpaceOnUse" cx="681" cy="450" r="228" fx="666" fy="446"><stop offset="0" stop-color="#ffffff"/><stop offset="0.025" stop-color="#ffeeff"/><stop offset="0.08" stop-color="#ff88ff"/><stop offset="0.14" stop-color="#ff10f8"/><stop offset="0.18" stop-color="#ff0090"/><stop offset="0.215" stop-color="#ff0000"/><stop offset="0.25" stop-color="#ff8000"/><stop offset="0.285" stop-color="#ffff00"/><stop offset="0.32" stop-color="#a0ff00"/><stop offset="0.37" stop-color="#00ff00"/><stop offset="0.41" stop-color="#00ff80"/><stop offset="0.465" stop-color="#00ffff"/><stop offset="0.52" stop-color="#0080ff"/><stop offset="0.57" stop-color="#0000ff"/><stop offset="0.66" stop-color="#0000a0"/><stop offset="0.76" stop-color="#000058"/><stop offset="0.87" stop-color="#000030"/><stop offset="0.985" stop-color="#00000f"/><stop offset="0.99" stop-color="#000000"/><stop offset="1" stop-color="#000000"/></radialGradient></defs>
<rect x="413" y="138" width="543" height="543" fill="#000"/>
<rect x="413" y="138" width="543" height="543" fill="url(#beam)"/>
<path d="M413 676.5h4 M418.3 681v-4.5 M413 664.3h4 M430.5 681v-4.5 M413 652.2h8 M442.6 681v-8.5 M413 640.1h4 M454.7 681v-4.5 M413 628.0h4 M466.9 681v-4.5 M413 615.8h4 M479.0 681v-4.5 M413 603.7h4 M491.1 681v-4.5 M413 591.6h8 M503.3 681v-8.5 M413 579.5h4 M515.4 681v-4.5 M413 567.3h4 M527.5 681v-4.5 M413 555.2h4 M539.7 681v-4.5 M413 543.1h4 M551.8 681v-4.5 M413 531.0h8 M563.9 681v-8.5 M413 518.8h4 M576.1 681v-4.5 M413 506.7h4 M588.2 681v-4.5 M413 494.6h4 M600.4 681v-4.5 M413 482.4h4 M612.5 681v-4.5 M413 470.3h8 M624.6 681v-8.5 M413 458.2h4 M636.8 681v-4.5 M413 446.1h4 M648.9 681v-4.5 M413 433.9h4 M661.0 681v-4.5 M413 421.8h4 M673.2 681v-4.5 M413 409.7h8 M685.3 681v-8.5 M413 397.6h4 M697.4 681v-4.5 M413 385.4h4 M709.6 681v-4.5 M413 373.3h4 M721.7 681v-4.5 M413 361.2h4 M733.8 681v-4.5 M413 349.1h8 M746.0 681v-8.5 M413 336.9h4 M758.1 681v-4.5 M413 324.8h4 M770.2 681v-4.5 M413 312.7h4 M782.4 681v-4.5 M413 300.6h4 M794.5 681v-4.5 M413 288.4h8 M806.6 681v-8.5 M413 276.3h4 M818.8 681v-4.5 M413 264.2h4 M830.9 681v-4.5 M413 252.1h4 M843.1 681v-4.5 M413 239.9h4 M855.2 681v-4.5 M413 227.8h8 M867.3 681v-8.5 M413 215.7h4 M879.5 681v-4.5 M413 203.6h4 M891.6 681v-4.5 M413 191.4h4 M903.7 681v-4.5 M413 179.3h4 M915.9 681v-4.5 M413 167.2h8 M928.0 681v-8.5 M413 155.1h4 M940.1 681v-4.5 M413 142.9h4 M952.3 681v-4.5" stroke="#fff" stroke-width="1.2"/>
<text x="426" y="656.0" font-family="Liberation Sans" font-size="10.5" fill="#f4f4f4">-4000</text>
<text x="441.1" y="666" text-anchor="middle" font-family="Liberation Sans" font-size="10.5" fill="#f4f4f4">-4000</text>
<text x="426" y="595.4" font-family="Liberation Sans" font-size="10.5" fill="#f4f4f4">-3000</text>
<text x="501.8" y="666" text-anchor="middle" font-family="Liberation Sans" font-size="10.5" fill="#f4f4f4">-3000</text>
<text x="426" y="534.8" font-family="Liberation Sans" font-size="10.5" fill="#f4f4f4">-2000</text>
<text x="562.4" y="666" text-anchor="middle" font-family="Liberation Sans" font-size="10.5" fill="#f4f4f4">-2000</text>
<text x="426" y="474.1" font-family="Liberation Sans" font-size="10.5" fill="#f4f4f4">-1000</text>
<text x="623.1" y="666" text-anchor="middle" font-family="Liberation Sans" font-size="10.5" fill="#f4f4f4">-1000</text>
<text x="426" y="413.5" font-family="Liberation Sans" font-size="10.5" fill="#f4f4f4">0</text>
<text x="683.8" y="666" text-anchor="middle" font-family="Liberation Sans" font-size="10.5" fill="#f4f4f4">0</text>
<text x="426" y="352.9" font-family="Liberation Sans" font-size="10.5" fill="#f4f4f4">1000</text>
<text x="744.5" y="666" text-anchor="middle" font-family="Liberation Sans" font-size="10.5" fill="#f4f4f4">1000</text>
<text x="426" y="292.2" font-family="Liberation Sans" font-size="10.5" fill="#f4f4f4">2000</text>
<text x="805.1" y="666" text-anchor="middle" font-family="Liberation Sans" font-size="10.5" fill="#f4f4f4">2000</text>
<text x="426" y="231.6" font-family="Liberation Sans" font-size="10.5" fill="#f4f4f4">3000</text>
<text x="865.8" y="666" text-anchor="middle" font-family="Liberation Sans" font-size="10.5" fill="#f4f4f4">3000</text>
<text x="426" y="171.0" font-family="Liberation Sans" font-size="10.5" fill="#f4f4f4">4000</text>
<text x="926.5" y="666" text-anchor="middle" font-family="Liberation Sans" font-size="10.5" fill="#f4f4f4">4000</text>
<path d="M414.5 226.0 C414.5 232.5 413.6 255.2 414.5 265.0 C415.4 274.8 417.6 277.7 419.8 284.8 C422.1 291.9 425.6 301.7 428.0 307.7 C430.4 313.7 431.0 315.8 434.5 320.7 C438.0 325.6 443.3 332.1 449.0 337.0 C454.7 341.9 460.5 345.1 468.7 350.0 C476.9 354.9 487.7 360.9 498.0 366.4 C508.3 371.8 520.4 376.4 530.7 382.7 C541.0 389.0 551.3 397.5 560.0 404.0 C568.7 410.5 577.8 417.0 583.0 421.9 C588.2 426.8 589.5 429.4 591.0 433.3 C592.5 437.2 592.0 442.0 592.0 445.0 C592.0 448.0 592.5 449.0 591.0 451.4 C589.5 453.8 587.6 456.1 583.0 459.6 C578.4 463.1 569.3 468.2 563.3 472.6 C557.3 477.0 551.6 480.8 547.0 485.7 C542.4 490.6 538.9 497.6 535.6 502.0 C532.4 506.4 532.7 507.5 527.5 511.8 C522.3 516.1 513.3 522.8 504.6 528.0 C495.9 533.2 485.6 535.7 475.3 542.8 C465.0 549.9 449.7 563.2 442.6 570.5 C435.5 577.8 435.5 580.3 432.8 586.8 C430.1 593.3 428.7 602.1 426.3 609.7 C423.9 617.3 420.1 625.0 418.2 632.5 C416.3 640.0 415.5 646.9 414.9 655.0 C414.3 663.1 414.6 676.7 414.5 681.0" fill="none" stroke="#ffff00" stroke-width="2" stroke-linejoin="round"/>
<path d="M488.3 679.8 C491.6 679.2 500.4 678.4 508.0 676.5 C515.6 674.6 526.4 672.8 534.0 668.4 C541.6 664.0 546.0 659.6 553.6 650.4 C561.2 641.2 573.6 621.9 579.7 613.0 C585.8 604.1 585.7 604.0 590.0 597.0 C594.3 590.0 600.5 579.7 605.7 571.0 C610.9 562.3 616.1 553.5 621.3 544.8 C626.5 536.1 632.2 524.6 637.0 518.7 C641.8 512.8 646.1 511.6 650.0 509.6 C653.9 507.7 656.6 507.1 660.5 507.0 C664.4 506.9 668.8 506.0 673.6 508.8 C678.4 511.6 684.0 517.6 689.2 524.0 C694.4 530.4 699.8 539.6 705.0 547.4 C710.2 555.2 714.9 563.6 720.5 571.0 C726.1 578.4 732.7 586.1 738.8 591.8 C744.9 597.4 751.4 600.7 757.0 604.9 C762.6 609.1 767.7 612.9 772.3 617.0 C776.9 621.1 780.6 624.9 784.7 629.4 C788.8 633.9 792.2 639.0 797.0 643.8 C801.8 648.6 807.7 654.4 813.5 658.2 C819.3 662.0 825.5 664.0 832.0 666.4 C838.5 668.8 845.7 670.7 852.6 672.6 C859.5 674.5 864.1 676.5 873.2 677.7 C882.3 678.9 901.4 679.4 907.0 679.8" fill="none" stroke="#ffff00" stroke-width="2" stroke-linejoin="round"/>
<path d="M414.0 138.0 C414.0 157.5 413.6 232.2 414.0 255.0 C414.4 277.8 415.0 267.8 416.5 275.0 C418.0 282.2 420.3 290.9 423.0 298.0 C425.7 305.1 429.0 311.5 432.8 317.5 C436.6 323.5 440.4 328.6 445.9 333.8 C451.3 339.0 457.9 343.3 465.5 348.5 C473.1 353.7 481.8 359.1 491.6 364.8 C501.4 370.5 513.3 376.4 524.2 382.7 C535.1 388.9 547.5 395.8 556.8 402.3 C566.0 408.8 574.3 416.5 579.7 421.9 C585.1 427.3 587.1 430.0 589.4 434.9 C591.7 439.8 593.8 445.2 593.5 451.0 C593.2 456.8 591.2 463.6 587.8 469.4 C584.4 475.2 579.9 480.5 573.1 485.7 C566.3 490.9 556.2 495.2 547.0 500.4 C537.8 505.6 528.0 510.7 517.7 516.7 C507.4 522.7 494.8 530.0 485.0 536.2 C475.2 542.5 466.6 547.9 459.0 554.2 C451.4 560.5 444.8 566.7 439.4 573.8 C433.9 580.9 429.8 588.5 426.3 596.6 C422.8 604.8 420.1 614.6 418.2 622.7 C416.3 630.9 415.6 639.3 414.9 645.5 C414.2 651.7 414.1 654.1 414.0 660.0 C413.9 665.9 414.0 677.5 414.0 681.0" fill="none" stroke="#ff0000" stroke-width="2" stroke-linejoin="round"/>
<path d="M413.3 680.0 C423.6 679.9 459.5 680.2 475.3 679.1 C491.1 678.0 498.8 675.4 508.0 673.3 C517.2 671.2 523.1 670.8 530.7 666.7 C538.3 662.6 545.4 657.2 553.6 648.8 C561.8 640.4 573.6 623.6 579.7 616.2 C585.8 608.8 585.7 610.6 590.0 604.4 C594.3 598.2 600.5 587.2 605.7 578.8 C610.9 570.4 616.1 561.4 621.3 554.0 C626.5 546.6 631.8 540.1 637.0 534.4 C642.2 528.7 646.6 523.7 652.7 520.0 C658.8 516.3 666.7 512.9 673.6 512.2 C680.5 511.5 688.3 513.2 694.4 516.0 C700.5 518.8 704.8 523.3 710.0 529.0 C715.2 534.7 720.6 542.6 725.8 550.0 C731.0 557.4 736.2 564.8 741.4 573.5 C746.6 582.2 752.2 594.3 757.0 602.3 C761.8 610.2 766.4 616.0 770.3 621.2 C774.2 626.4 776.1 628.7 780.6 633.5 C785.1 638.3 791.5 645.2 797.0 650.0 C802.5 654.8 807.7 658.7 813.5 662.3 C819.3 665.9 825.5 669.2 832.0 671.6 C838.5 674.0 845.7 675.3 852.6 676.7 C859.5 678.1 856.0 679.2 873.2 679.8 C890.4 680.4 942.2 680.1 956.0 680.2" fill="none" stroke="#ff0000" stroke-width="2" stroke-linejoin="round"/>
</svg>
<div class="t" style="left:596px;top:113.5px;font-size:13.5px;font-weight:bold;letter-spacing:-0.05px;color:#fff;text-shadow:0 0 1px #000,0 0 1px #000,1px 1px 1px #223">2D Reconstruction</div>

<div class="a" style="left:0;top:761px;width:972px;height:5px;background:#16262e;border-top:1px solid #8fa8b2"></div>
<div class="a" style="left:7px;top:760px;width:958px;height:1px;background:#141e24"></div>
<!-- status bar -->
<svg class="a" style="left:311px;top:741px" width="15" height="15" viewBox="0 0 15 15">
 <defs><radialGradient id="gck" cx="0.4" cy="0.3" r="0.8"><stop offset="0" stop-color="#7ad08a"/><stop offset="1" stop-color="#1f8a3a"/></radialGradient></defs>
 <circle cx="7.5" cy="7.2" r="6.3" fill="url(#gck)" stroke="#2a7a40" stroke-width="0.6"/>
 <path d="M4 7.5 L6.5 10 L11 4.5" fill="none" stroke="#fff" stroke-width="1.9"/>
</svg>
<div class="t" style="left:329px;top:743px;font-size:11px">No Instrument Errors.</div>
<svg class="a" style="left:467px;top:741px" width="11" height="14" viewBox="0 0 11 14"><defs><linearGradient id="gst" x1="0" y1="0" x2="1" y2="1"><stop offset="0" stop-color="#7ac0f4"/><stop offset="1" stop-color="#2a80d8"/></linearGradient></defs><path d="M1 1 L10 7 L1 13Z" fill="url(#gst)"/></svg>
<div class="t" style="left:483.5px;top:743px;font-size:11px;letter-spacing:-0.3px">10563</div>
<div class="t" style="left:516.5px;top:743px;font-size:11px">|</div>
<div class="t" style="left:526px;top:743px;font-size:11px">Samples: 7260</div>
<div class="t" style="left:602px;top:743px;font-size:11px">|</div>
<div class="t" style="left:612.5px;top:743px;font-size:11px">Target Scan Rate: 20.00 Hz</div>
<div class="t" style="left:751px;top:743px;font-size:11px">|</div>
<div class="t" style="left:760.5px;top:743px;font-size:11px;letter-spacing:0.25px">Resolution: 1.24 μm</div>
<div class="t" style="left:867.5px;top:743px;font-size:11px">|</div>
<div class="t" style="left:899.5px;top:743px;font-size:11px">3.12 fps</div>
<svg class="a" style="left:950px;top:747px" width="13" height="13" viewBox="0 0 13 13"><path d="M12 3 L3 12 M12 6 L6 12 M12 9 L9 12 M12 0 L0 12" stroke="#b8b8b8" stroke-width="0.8"/></svg>

</body></html>
